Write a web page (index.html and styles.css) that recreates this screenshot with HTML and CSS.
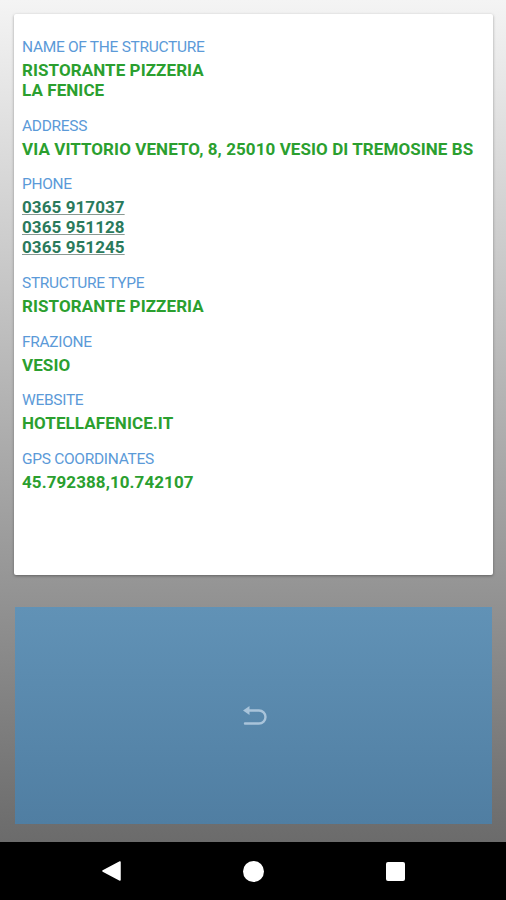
FILE: index.html
```html
<!DOCTYPE html>
<html lang="en">
<head>
    <meta charset="UTF-8">
    <meta name="viewport" content="width=device-width, initial-scale=1.0">
    <title>La Fenice</title>
    <link rel="stylesheet" href="styles.css">
</head>
<body>
    <div class="screen">
        <div class="card">
            <div class="field">
                <div class="label">Name of the structure</div>
                <div class="value">Ristorante Pizzeria<br>La Fenice</div>
            </div>
            <div class="field">
                <div class="label">Address</div>
                <div class="value">Via Vittorio Veneto, 8, 25010 Vesio di Tremosine BS</div>
            </div>
            <div class="field">
                <div class="label">Phone</div>
                <div class="value">
                    <a class="phone" href="#">0365 917037</a><br>
                    <a class="phone" href="#">0365 951128</a><br>
                    <a class="phone" href="#">0365 951245</a>
                </div>
            </div>
            <div class="field">
                <div class="label">Structure type</div>
                <div class="value">Ristorante Pizzeria</div>
            </div>
            <div class="field">
                <div class="label">Frazione</div>
                <div class="value">Vesio</div>
            </div>
            <div class="field">
                <div class="label">Website</div>
                <div class="value">hotellafenice.it</div>
            </div>
            <div class="field">
                <div class="label">GPS coordinates</div>
                <div class="value">45.792388,10.742107</div>
            </div>
        </div>
        <div class="panel">
            <svg class="undo" width="28" height="22" viewBox="0 0 28 22">
                <path d="M9.5 3 L3 7.5 L9.5 12 Z" fill="#a9c4da"/>
                <path d="M6 7.5 H19 A6.5 6.5 0 0 1 19 20.5 H5" fill="none" stroke="#a9c4da" stroke-width="2.4" stroke-linecap="round"/>
            </svg>
        </div>
    </div>
    <div class="navbar">
        <svg width="19" height="20" viewBox="0 0 19 20"><path d="M18 1 L1 10 L18 19 Z" fill="#fff" stroke="#fff" stroke-width="1.5" stroke-linejoin="round"/></svg>
        <span class="home"></span>
        <span class="recent"></span>
    </div>
</body>
</html>
```

FILE: styles.css
```css
body {
    margin: 0;
    font-family: Roboto, "Liberation Sans", sans-serif;
    background: #000;
}
.screen {
    height: 842px;
    box-sizing: border-box;
    padding: 14px 13px 18px 14px;
    display: flex;
    flex-direction: column;
    background: linear-gradient(#f4f4f4, #6b6b6b);
}
.card {
    height: 561px;
    box-sizing: border-box;
    padding: 23px 8px 0 8px;
    background: #fff;
    border-radius: 2px;
    box-shadow: 0 1px 3px rgba(0, 0, 0, 0.35);
    display: flex;
    flex-direction: column;
    gap: 15.7px;
}
.label {
    font-size: 15.5px;
    line-height: 20px;
    letter-spacing: -0.3px;
    color: #5b9ad8;
    text-transform: uppercase;
}
.value {
    margin-top: 3px;
    font-size: 17px;
    line-height: 20px;
    letter-spacing: 0.08px;
    font-weight: bold;
    color: #2b9f2f;
    text-transform: uppercase;
}
.phone {
    color: #2a7a5c;
    text-decoration: underline;
    text-decoration-color: #8a9a94;
}
.panel {
    margin: 32px 1px 0 1px;
    flex: 1;
    background: linear-gradient(#6192b6, #507ea2);
    display: flex;
    align-items: center;
    justify-content: center;
}
.undo {
    margin-top: -3px;
}
.navbar {
    height: 58px;
    display: flex;
    align-items: center;
    justify-content: center;
    gap: 122px;
}
.home {
    width: 21px;
    height: 21px;
    border-radius: 50%;
    background: #fff;
}
.recent {
    width: 19px;
    height: 19px;
    border-radius: 2px;
    background: #fff;
}
```
